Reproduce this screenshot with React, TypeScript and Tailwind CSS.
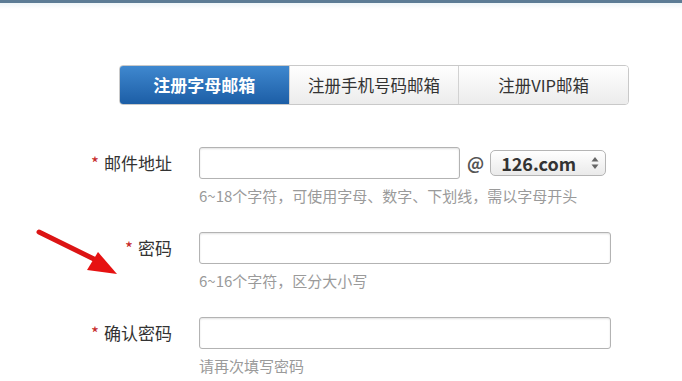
import React from "react";

const FONT = { fontFamily: '"Noto Sans CJK SC", "Noto Sans", sans-serif' };

type Field = {
  label: string;
  hint: string;
  width: string;
  domain?: boolean;
};

const fields: Field[] = [
  {
    label: "邮件地址",
    hint: "6~18个字符，可使用字母、数字、下划线，需以字母开头",
    width: "w-[261px]",
    domain: true,
  },
  { label: "密码", hint: "6~16个字符，区分大小写", width: "w-[412px]" },
  { label: "确认密码", hint: "请再次填写密码", width: "w-[412px]" },
];

const tabs = ["注册字母邮箱", "注册手机号码邮箱", "注册VIP邮箱"];

function Tabs() {
  return (
    <div className="ml-[119px] flex h-[40px] w-[510px] overflow-hidden rounded-[4px] border border-[#c9c9c9]">
      {tabs.map((tab, index) =>
        index === 0 ? (
          <div
            key={tab}
            className="flex w-[169px] items-center justify-center bg-gradient-to-b from-[#3f88cf] to-[#1c5ea6] text-[17px] font-bold text-white"
          >
            {tab}
          </div>
        ) : (
          <div
            key={tab}
            className="flex w-[170px] items-center justify-center border-l border-[#d2d2d2] bg-gradient-to-b from-white to-[#ececec] text-[16.5px] text-[#333]"
          >
            {tab}
          </div>
        ),
      )}
    </div>
  );
}

function DomainSelect() {
  return (
    <div className="ml-[7px] flex items-center">
      <span className="text-[17px] font-bold text-[#555]">@</span>
      <div className="ml-[6px] flex h-[26px] w-[116px] items-center justify-between rounded-[5px] border border-[#b5b5b5] bg-gradient-to-b from-white to-[#eaeaea] pl-[10px] pr-[6px]">
        <span className="text-[18px] font-bold leading-none text-[#333]">126.com</span>
        <svg width="8" height="14" viewBox="0 0 8 14">
          <path d="M4 1 L7.5 5.5 L0.5 5.5 Z" fill="#666" />
          <path d="M4 13 L7.5 8.5 L0.5 8.5 Z" fill="#666" />
        </svg>
      </div>
    </div>
  );
}

function FormRow({ field }: { field: Field }) {
  return (
    <div className="mb-[26px]">
      <div className="flex h-[32px] items-center">
        <div className="w-[172px] text-right text-[17px] text-[#333]">
          <span className="mr-[5px] text-[#c62828]">*</span>
          {field.label}
        </div>
        <div
          className={`ml-[27px] h-[32px] ${field.width} rounded-[3px] border border-[#b3b3b3] bg-white shadow-[inset_0_1px_2px_rgba(0,0,0,0.12)]`}
        />
        {field.domain && <DomainSelect />}
      </div>
      <div className="ml-[199px] mt-[7px] text-[15px] leading-[20px] text-[#9a9a9a]">
        {field.hint}
      </div>
    </div>
  );
}

export default function App() {
  return (
    <div className="relative h-[381px] w-[682px] overflow-hidden bg-white" style={FONT}>
      <div className="h-[3px] bg-[#5d7c95]" />
      <div className="h-[6px] bg-gradient-to-b from-[#eef5f8] to-white" />
      <div className="pt-[56px]">
        <Tabs />
      </div>
      <div className="mt-[42px]">
        {fields.map((field) => (
          <FormRow key={field.label} field={field} />
        ))}
      </div>
      <svg
        className="absolute left-0 top-0"
        width="140"
        height="300"
        viewBox="0 0 140 300"
      >
        <line x1="39" y1="232" x2="100" y2="262" stroke="#dc1414" strokeWidth="5" strokeLinecap="round" />
        <path d="M117 274 L87 270 L98 252 Z" fill="#e61212" />
      </svg>
    </div>
  );
}
